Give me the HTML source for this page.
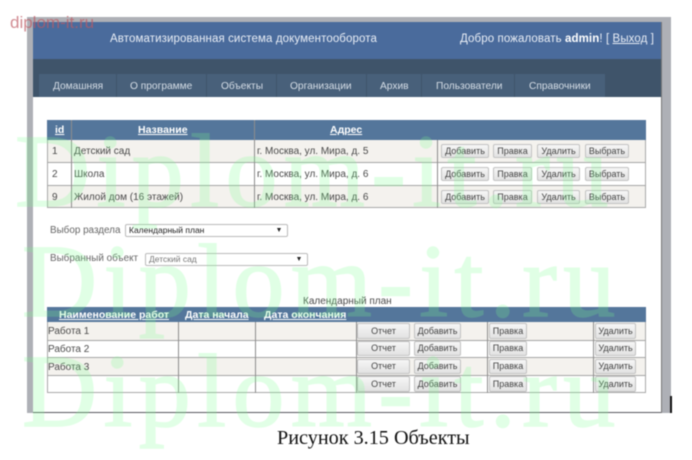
<!DOCTYPE html>
<html lang="ru"><head><meta charset="utf-8"><title>Объекты</title>
<style>
html,body{margin:0;padding:0;background:#fff}
#s{position:relative;width:692px;height:460px;overflow:hidden;background:#fff;font-family:"Liberation Sans",sans-serif;color:#4a4a4a;font-size:10px}
#w{position:absolute;left:0;top:0;width:692px;height:460px;filter:blur(.4px)}
.a{position:absolute;box-sizing:border-box}
.t{position:absolute;white-space:nowrap;line-height:14px}
.n{color:#d5dde6;font-size:10.2px;top:80px}
.b{position:absolute;box-sizing:border-box;background:linear-gradient(#f6f6f6,#e2e2e2);border:1px solid #c2c2c2;border-radius:2px;text-align:center;color:#444;font-size:9px;white-space:nowrap}
.h{color:#fff;font-weight:bold;text-decoration:underline;font-size:10.5px;position:absolute;white-space:nowrap;line-height:14px}
.wm{position:absolute;font-family:"Liberation Serif",serif;font-size:104px;line-height:104px;letter-spacing:6.4px;color:#78ff8c;-webkit-text-stroke:1.5px #78ff8c;opacity:.22;white-space:nowrap}
.sel{position:absolute;box-sizing:border-box;background:#fff;border:1px solid #bbb;border-radius:2px;font-size:8.5px;line-height:11px;padding-left:3px;color:#222}
.sel i{position:absolute;right:6px;top:3px;width:0;height:0;border-left:2px solid transparent;border-right:2px solid transparent;border-top:4px solid #222}
</style></head><body>
<div id="s"><div id="w">
<div class="a" style="left:27px;top:17px;width:644px;height:396px;background:#aeb0b6"></div>
<div class="a" style="left:33px;top:22px;width:628px;height:390px;background:#fff"></div>
<div class="a" style="left:33px;top:412px;width:628px;height:1px;background:#5a5a60"></div>
<div class="a" style="left:661px;top:22px;width:1px;height:391px;background:#777"></div>
<div class="a" style="left:670px;top:396px;width:2px;height:17px;background:#111"></div>
<div class="a" style="left:33px;top:22px;width:628px;height:37px;background:#4a6b9c"></div>
<div class="a" style="left:33px;top:59px;width:628px;height:38px;background:#3f546a"></div>
<div class="a" style="left:39px;top:74px;width:566px;height:23px;background:#48607a"></div>
<div class="a" style="left:116px;top:74px;width:1px;height:23px;background:#3f546a"></div>
<div class="a" style="left:206px;top:74px;width:1px;height:23px;background:#3f546a"></div>
<div class="a" style="left:276px;top:74px;width:1px;height:23px;background:#3f546a"></div>
<div class="a" style="left:366px;top:74px;width:1px;height:23px;background:#3f546a"></div>
<div class="a" style="left:421px;top:74px;width:1px;height:23px;background:#3f546a"></div>
<div class="a" style="left:514px;top:74px;width:1px;height:23px;background:#3f546a"></div>
<div class="t" style="left:110px;top:32px;color:#e8edf5;font-size:11.5px;letter-spacing:.1px">Автоматизированная система документооборота</div>
<div class="t" style="left:460px;top:32px;color:#e8edf5;font-size:11.5px;letter-spacing:.1px">Добро пожаловать <b style="color:#fff">admin</b>! [ <u>Выход</u> ]</div>
<div class="t n" style="left:53px">Домашняя</div>
<div class="t n" style="left:130px">О программе</div>
<div class="t n" style="left:221px">Объекты</div>
<div class="t n" style="left:290px">Организации</div>
<div class="t n" style="left:380px">Архив</div>
<div class="t n" style="left:436px">Пользователи</div>
<div class="t n" style="left:529px">Справочники</div>

<div class="a" style="left:47px;top:120px;width:599px;height:20px;background:#54769b"></div>
<div class="a" style="left:47px;top:140px;width:599px;height:22px;background:#f4f2ee"></div>
<div class="a" style="left:47px;top:185px;width:599px;height:23px;background:#f4f2ee"></div>
<div class="a" style="left:47px;top:140px;width:599px;height:68px;border:1px solid #a9a9a9;border-top:0"></div>
<div class="a" style="left:47px;top:162px;width:599px;height:1px;background:#a5a5a5"></div>
<div class="a" style="left:47px;top:185px;width:599px;height:1px;background:#a5a5a5"></div>
<div class="a" style="left:71px;top:120px;width:1px;height:88px;background:#8d8d8d"></div>
<div class="a" style="left:254px;top:120px;width:1px;height:88px;background:#8d8d8d"></div>
<div class="a" style="left:437px;top:140px;width:1px;height:68px;background:#8d8d8d"></div>
<div class="h" style="left:55px;top:123px">id</div>
<div class="h" style="left:138px;top:123px">Название</div>
<div class="h" style="left:330px;top:123px">Адрес</div>
<div class="t" style="left:52px;top:145px">1</div><div class="t" style="left:74px;top:145px">Детский сад</div><div class="t" style="left:257px;top:145px">г. Москва, ул. Мира, д. 5</div>
<div class="t" style="left:52px;top:168px">2</div><div class="t" style="left:74px;top:168px">Школа</div><div class="t" style="left:257px;top:168px">г. Москва, ул. Мира, д. 6</div>
<div class="t" style="left:52px;top:191px">9</div><div class="t" style="left:74px;top:191px">Жилой дом (16 этажей)</div><div class="t" style="left:257px;top:191px">г. Москва, ул. Мира, д. 6</div>

<div class="b" style="left:441px;top:144px;width:48px;height:14px;line-height:12px">Добавить</div><div class="b" style="left:493px;top:144px;width:39px;height:14px;line-height:12px">Правка</div><div class="b" style="left:537px;top:144px;width:43px;height:14px;line-height:12px">Удалить</div><div class="b" style="left:585px;top:144px;width:44px;height:14px;line-height:12px">Выбрать</div>
<div class="b" style="left:441px;top:167px;width:48px;height:14px;line-height:12px">Добавить</div><div class="b" style="left:493px;top:167px;width:39px;height:14px;line-height:12px">Правка</div><div class="b" style="left:537px;top:167px;width:43px;height:14px;line-height:12px">Удалить</div><div class="b" style="left:585px;top:167px;width:44px;height:14px;line-height:12px">Выбрать</div>
<div class="b" style="left:441px;top:190px;width:48px;height:14px;line-height:12px">Добавить</div><div class="b" style="left:493px;top:190px;width:39px;height:14px;line-height:12px">Правка</div><div class="b" style="left:537px;top:190px;width:43px;height:14px;line-height:12px">Удалить</div><div class="b" style="left:585px;top:190px;width:44px;height:14px;line-height:12px">Выбрать</div>

<div class="t" style="left:50px;top:224px;font-size:9.9px;color:#666">Выбор раздела</div>
<div class="sel" style="left:125px;top:224px;width:163px;height:13px">Календарный план<i></i></div>
<div class="t" style="left:50px;top:252px;font-size:9.9px;color:#666">Выбранный объект</div>
<div class="sel" style="left:145px;top:253px;width:163px;height:13px;color:#777">Детский сад<i></i></div>

<div class="t" style="left:303px;top:295px;font-size:10px">Календарный план</div>
<div class="a" style="left:47px;top:307px;width:599px;height:15px;background:#54769b"></div>
<div class="a" style="left:47px;top:322px;width:599px;height:18px;background:#f4f2ee"></div>
<div class="a" style="left:47px;top:358px;width:599px;height:17px;background:#f4f2ee"></div>
<div class="a" style="left:47px;top:322px;width:599px;height:71px;border:1px solid #a9a9a9;border-top:0"></div>
<div class="a" style="left:47px;top:340px;width:599px;height:1px;background:#a5a5a5"></div>
<div class="a" style="left:47px;top:357px;width:599px;height:1px;background:#a5a5a5"></div>
<div class="a" style="left:47px;top:375px;width:599px;height:1px;background:#a5a5a5"></div>
<div class="a" style="left:178px;top:322px;width:1px;height:71px;background:#8d8d8d"></div>
<div class="a" style="left:255px;top:322px;width:1px;height:71px;background:#8d8d8d"></div>
<div class="a" style="left:356px;top:322px;width:1px;height:71px;background:#8d8d8d"></div>
<div class="a" style="left:487px;top:322px;width:1px;height:71px;background:#8d8d8d"></div>
<div class="a" style="left:593px;top:322px;width:1px;height:71px;background:#8d8d8d"></div>
<div class="h" style="left:59px;top:308px">Наименование работ</div>
<div class="h" style="left:185px;top:308px">Дата начала</div>
<div class="h" style="left:264px;top:308px">Дата окончания</div>
<div class="t" style="left:48px;top:325px">Работа 1</div>
<div class="t" style="left:48px;top:343px">Работа 2</div>
<div class="t" style="left:48px;top:361px">Работа 3</div>

<div class="b" style="left:357px;top:323px;width:53px;height:16px;line-height:14px">Отчет</div><div class="b" style="left:414px;top:323px;width:47px;height:16px;line-height:14px">Добавить</div><div class="b" style="left:489px;top:323px;width:38px;height:16px;line-height:14px">Правка</div><div class="b" style="left:595px;top:323px;width:41px;height:16px;line-height:14px">Удалить</div>
<div class="b" style="left:357px;top:341px;width:53px;height:15px;line-height:13px">Отчет</div><div class="b" style="left:414px;top:341px;width:47px;height:15px;line-height:13px">Добавить</div><div class="b" style="left:489px;top:341px;width:38px;height:15px;line-height:13px">Правка</div><div class="b" style="left:595px;top:341px;width:41px;height:15px;line-height:13px">Удалить</div>
<div class="b" style="left:357px;top:359px;width:53px;height:15px;line-height:13px">Отчет</div><div class="b" style="left:414px;top:359px;width:47px;height:15px;line-height:13px">Добавить</div><div class="b" style="left:489px;top:359px;width:38px;height:15px;line-height:13px">Правка</div><div class="b" style="left:595px;top:359px;width:41px;height:15px;line-height:13px">Удалить</div>
<div class="b" style="left:357px;top:376px;width:53px;height:16px;line-height:14px">Отчет</div><div class="b" style="left:414px;top:376px;width:47px;height:16px;line-height:14px">Добавить</div><div class="b" style="left:489px;top:376px;width:38px;height:16px;line-height:14px">Правка</div><div class="b" style="left:595px;top:376px;width:41px;height:16px;line-height:14px">Удалить</div>

<div class="t" style="left:277px;top:428px;height:20px;line-height:20px;font-family:'Liberation Serif',serif;font-size:20.2px;color:#111">Рисунок 3.15 Объекты</div>
<div class="t" style="left:10px;top:14px;height:18px;line-height:18px;font-size:17px;color:rgba(190,90,100,.7)">diplom-it.ru</div>
<div class="wm" style="left:15px;top:120px">Diplom-it.ru</div>
<div class="wm" style="left:22px;top:230px">Diplom-it.ru</div>
<div class="wm" style="left:22px;top:340px">Diplom-it.ru</div>
</div></div>
</body></html>
